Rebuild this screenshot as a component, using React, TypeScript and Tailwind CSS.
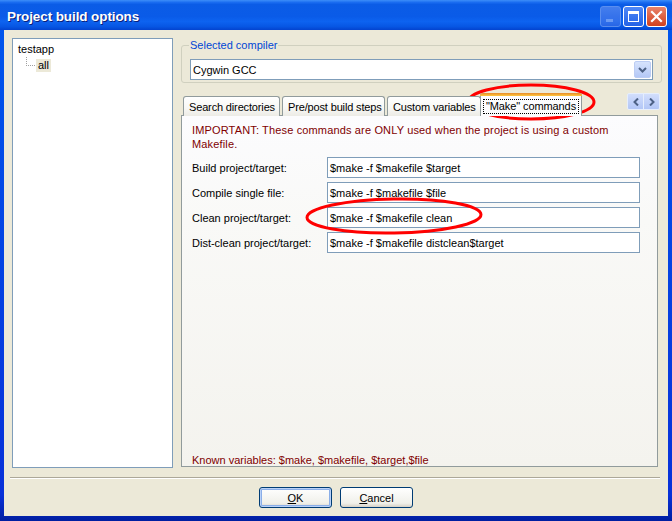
import React from "react";

const font = "font-['Liberation_Sans',Arial,sans-serif]";

function Tab({ label, w, ml }: { label: string; w: string; ml: string }) {
  return (
    <div
      className={`${w} ${ml} h-[20px] mb-[-1px] flex items-center pl-[5px] border border-[#919b9c] border-b-0 rounded-t-[3px] bg-[linear-gradient(to_bottom,#ffffff_0%,#f7f7f4_60%,#ecebe5_100%)] text-black whitespace-nowrap overflow-hidden tracking-[-0.15px]`}
    >
      {label}
    </div>
  );
}

function Row({ label, value }: { label: string; value: string }) {
  return (
    <div className="flex items-center h-[21px]">
      <div className="w-[135px] text-black">{label}</div>
      <div className="w-[313px] h-[21px] border border-[#7f9db9] bg-white flex items-center pl-[2px] text-black whitespace-nowrap">
        {value}
      </div>
    </div>
  );
}

export default function App() {
  return (
    <div className={`relative w-[672px] h-[521px] flex flex-col bg-[linear-gradient(to_bottom,#0058ee_0%,#0831d9_95%,#001ea0_100%)] ${font} text-[11px] leading-[14px] overflow-hidden`}>
      {/* Title bar */}
      <div className="h-[30px] shrink-0 flex items-center pl-[7px] pr-[5px] bg-[linear-gradient(to_bottom,#3d8ef8_0%,#1a6cf0_8%,#0b5ce6_15%,#0a5be8_55%,#0d63f0_72%,#0757e4_88%,#0343cf_100%)]">
        <span className="text-white font-bold text-[13.5px] tracking-[-0.1px] [text-shadow:1px_1px_0_#0a1f7a] mt-[3px]">
          Project build options
        </span>
        <div className="ml-auto flex gap-[2px] mt-[3px]">
          <div className="w-[21px] h-[21px] rounded-[3px] border border-[#8fb0f5] bg-[linear-gradient(to_bottom,#6b95f3,#3d6fe6)] opacity-60 relative">
            <div className="absolute left-[5px] bottom-[4px] w-[7px] h-[3px] bg-[#a9c0f7]" />
          </div>
          <div className="w-[21px] h-[21px] rounded-[3px] border border-white bg-[linear-gradient(to_bottom,#4f88f7,#2462e6)] relative">
            <div className="absolute left-[4px] top-[4px] w-[11px] h-[11px] border border-white border-t-[3px]" />
          </div>
          <div className="w-[21px] h-[21px] rounded-[3px] border border-white bg-[linear-gradient(to_bottom,#e8836a,#d2411f)] flex items-center justify-center">
            <svg width="13" height="13" viewBox="0 0 13 13">
              <path d="M2 2 L11 11 M11 2 L2 11" stroke="white" strokeWidth="2.2" strokeLinecap="square" />
            </svg>
          </div>
        </div>
      </div>

      {/* Body */}
      <div className="flex-1 mx-[4px] mb-[5px] bg-[#ece9d8] flex flex-col">
        <div className="flex gap-[8px] pt-[8px] pl-[8px]">
          {/* Tree */}
          <div className="w-[161px] h-[430px] border border-[#7f9db9] bg-white relative">
            <div className="pl-[5px] pt-[2px] text-black leading-[16px]">testapp</div>
            <div className="flex items-center h-[16px]">
              <div className="ml-[13px] w-[10px] h-[16px] relative">
                <div className="absolute left-0 top-0 h-[9px] border-l border-dotted border-[#a0a0a0]" />
                <div className="absolute left-0 top-[8px] w-[9px] border-t border-dotted border-[#a0a0a0]" />
              </div>
              <div className="bg-[#ece9d8] px-[2px] h-[13px] leading-[13px] text-black">all</div>
            </div>
          </div>

          {/* Right column */}
          <div className="w-[479px] flex flex-col">
            <fieldset className="h-[45px] border border-[#d0d0bf] rounded-[3px] px-[8px] pb-[2px]">
              <legend className="text-[#0046d5] px-[1px] -ml-[1px] leading-[14px]">Selected compiler</legend>
              <div className="mt-[7px] w-[463px] h-[21px] border border-[#7f9db9] bg-white flex items-center pl-[2px] text-black">
                <span>Cygwin GCC</span>
                <div className="ml-auto mr-[1px] w-[17px] h-[17px] rounded-[2px] bg-[linear-gradient(to_bottom,#d6e3fd,#b4c8f6)] border border-[#bccdf4] flex items-center justify-center">
                  <svg width="9" height="6" viewBox="0 0 9 6">
                    <path d="M1 1 L4.5 4.5 L8 1" stroke="#4d6185" strokeWidth="2" fill="none" />
                  </svg>
                </div>
              </div>
            </fieldset>

            {/* Tabs */}
            <div className="mt-[9px] h-[23px] flex items-end relative z-10">
              <Tab label="Search directories" w="w-[97px]" ml="ml-[2px]" />
              <Tab label="Pre/post build steps" w="w-[103px]" ml="ml-[2px]" />
              <Tab label="Custom variables" w="w-[94px]" ml="ml-[2px]" />
              <div className="w-[102px] -ml-[1px] h-[23px] mb-[-1px] relative flex items-center justify-center border border-[#919b9c] border-b-0 border-t-0 rounded-t-[3px] bg-[#fcfcfe] z-10">
                <div className="absolute left-[-1px] right-[-1px] top-0 h-[3px] rounded-t-[3px] bg-[linear-gradient(to_bottom,#e68b2c,#ffc83c)]" />
                <div className="mt-[3px] border border-dotted border-black px-[2px] leading-[13px] text-black whitespace-nowrap tracking-[-0.1px]">
                  "Make" commands
                </div>
              </div>
              <div className="ml-auto self-start mt-[1px] w-[33px] h-[17px] flex rounded-[2px] border border-[#e6eefc] bg-[linear-gradient(to_bottom,#d2defc,#b2c6f6)]">
                <div className="flex-1 flex items-center justify-center">
                  <svg width="6" height="8" viewBox="0 0 6 8">
                    <path d="M5 0.5 L1.5 4 L5 7.5" stroke="#4d6185" strokeWidth="2" fill="none" />
                  </svg>
                </div>
                <div className="w-px bg-[#e6eefc]" />
                <div className="flex-1 flex items-center justify-center">
                  <svg width="6" height="8" viewBox="0 0 6 8">
                    <path d="M1 0.5 L4.5 4 L1 7.5" stroke="#4d6185" strokeWidth="2" fill="none" />
                  </svg>
                </div>
              </div>
            </div>

            {/* Panel */}
            <div className="w-[477px] h-[352px] border border-[#919b9c] bg-[linear-gradient(to_bottom,#fcfcfe_0%,#f9f9f7_30%,#f4f3ee_100%)] flex flex-col pl-[10px] pt-[7px]">
              <div className="text-[#800000] w-[430px] tracking-[0.15px]">
                IMPORTANT: These commands are ONLY used when the project is using a custom
                <br />
                Makefile.
              </div>
              <div className="mt-[6px] flex flex-col gap-[4px]">
                <Row label="Build project/target:" value="$make -f $makefile $target" />
                <Row label="Compile single file:" value="$make -f $makefile $file" />
                <Row label="Clean project/target:" value="$make -f $makefile clean" />
                <Row label="Dist-clean project/target:" value="$make -f $makefile distclean$target" />
              </div>
              <div className="mt-auto text-[#800000] leading-[12px]">
                Known variables: $make, $makefile, $target,$file
              </div>
            </div>
          </div>
        </div>

        {/* Separator */}
        <div className="mt-[9px] ml-[6px] mr-[8px] border-t border-[#aca899] border-b border-b-white" />

        {/* Buttons */}
        <div className="mt-[8px] flex justify-center gap-[8px]">
          <button className="w-[73px] h-[21px] rounded-[3px] border border-[#003c74] bg-[linear-gradient(to_bottom,#ffffff,#f0f0ea_80%,#d6d0c5)] shadow-[inset_0_0_0_1px_#b9d1f8,inset_0_0_0_2px_#8aaee8] text-black text-[11px] leading-[14px]">
            <span className="underline underline-offset-[1px]">O</span>K
          </button>
          <button className="w-[73px] h-[21px] rounded-[3px] border border-[#003c74] bg-[linear-gradient(to_bottom,#ffffff,#f0f0ea_80%,#d6d0c5)] text-black text-[11px] leading-[14px]">
            <span className="underline underline-offset-[1px]">C</span>ancel
          </button>
        </div>
      </div>

      {/* Annotations */}
      <svg className="absolute left-0 top-0 pointer-events-none" width="672" height="521">
        <ellipse cx="531" cy="102" rx="63" ry="17" stroke="#ff0000" strokeWidth="3" fill="none" />
        <ellipse cx="394" cy="216" rx="87" ry="17" stroke="#ff0000" strokeWidth="3" fill="none" transform="rotate(-1 394 216)" />
      </svg>
    </div>
  );
}
